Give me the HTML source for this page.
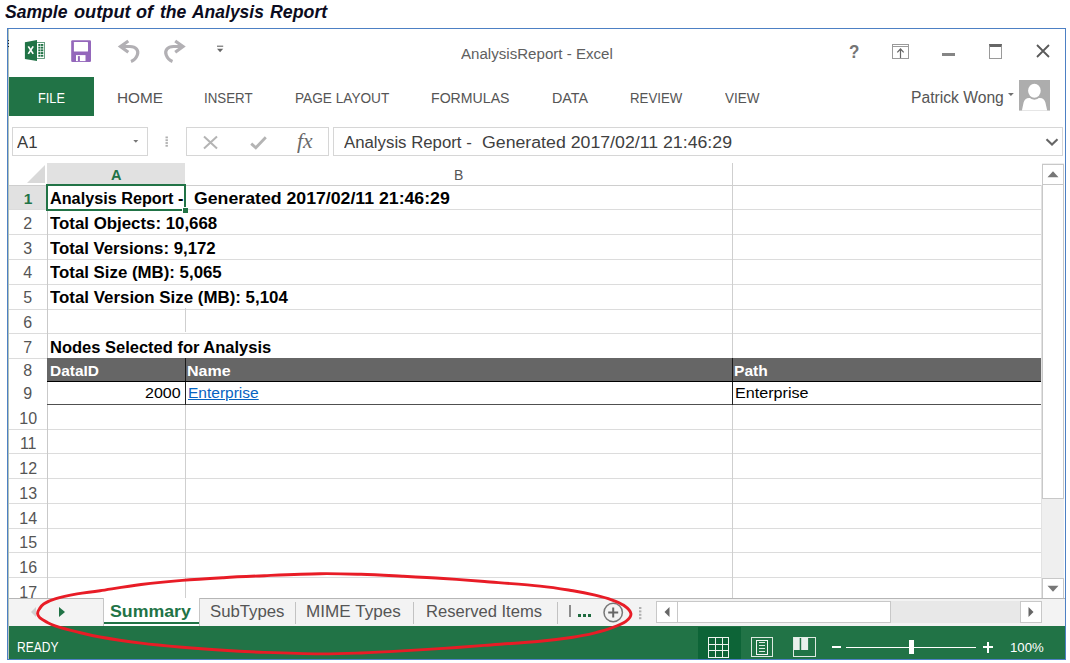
<!DOCTYPE html>
<html><head><meta charset="utf-8"><title>Analysis Report</title>
<style>
html,body{margin:0;padding:0;background:#fff;}
body{width:1070px;height:663px;position:relative;overflow:hidden;font-family:"Liberation Sans",sans-serif;}
.t{position:absolute;white-space:pre;line-height:1;transform-origin:0 50%;display:block;}
.a{position:absolute;box-sizing:border-box;}
svg{position:absolute;overflow:visible;}
.hl{position:absolute;left:9px;width:1032px;height:1px;background:#dcdcdc;}
.vl{position:absolute;width:1px;background:#cfcfcf;}
.sans{font-family:"Liberation Sans",sans-serif;}
.serif{font-family:"Liberation Serif",serif;}
.p{display:inline-block;width:0;height:0;vertical-align:baseline;}

</style></head>
<body>
<div class="a" style="left:7px;top:28px;width:1059px;height:632px;border:1px solid #4d80c4;background:#fff;"></div>
<div class="a" style="left:8px;top:29px;width:1px;height:630px;background:rgba(105,135,115,0.5);"></div>
<div class="a" style="left:8px;top:40px;width:1px;height:1.4px;background:#222;"></div><div class="a" style="left:8px;top:43px;width:1px;height:1.4px;background:#222;"></div><div class="a" style="left:8px;top:46px;width:1px;height:1.4px;background:#222;"></div>
<div class="a" style="left:9px;top:77px;width:85px;height:39px;background:#217346;"></div>
<svg style="left:0;top:0" width="1070" height="130">
<rect x="1019" y="80" width="31" height="30.6" fill="#adadad"/>
<path d="M1021.9 110.6 L1023.6 102.6 C1024.2 99.7 1026.3 97.9 1029 97.9 L1040 97.9 C1042.7 97.9 1044.8 99.7 1045.4 102.6 L1047.2 110.6 Z" fill="#fff"/>
<ellipse cx="1034.4" cy="91.2" rx="7.7" ry="8.5" fill="#adadad"/>
<ellipse cx="1034.4" cy="90.8" rx="6.3" ry="7" fill="#fff"/>
</svg>
<div class="a" style="left:12px;top:127px;width:136px;height:29px;border:1px solid #d6d6d6;background:#fff;"></div>
<div class="a" style="left:186px;top:127px;width:143px;height:29px;border:1px solid #d6d6d6;background:#fff;"></div>
<div class="a" style="left:333px;top:127px;width:730px;height:29px;border:1px solid #d6d6d6;background:#fff;"></div>
<div class="a" style="left:47px;top:163px;width:138px;height:21px;background:#e1e1e1;"></div>
<div class="a" style="left:9px;top:185px;width:37px;height:25px;background:#e1e1e1;"></div>
<svg style="left:27px;top:165px" width="18" height="18"><path d="M18 0 L18 18 L0 18 Z" fill="#d9d9d9"/></svg>
<div class="hl" style="top:185px;background:#cecece"></div>
<div class="hl" style="top:209px"></div>
<div class="hl" style="top:234px"></div>
<div class="hl" style="top:259px"></div>
<div class="hl" style="top:284px"></div>
<div class="hl" style="top:309px"></div>
<div class="hl" style="top:333px"></div>
<div class="hl" style="top:358px"></div>
<div class="hl" style="top:429px"></div>
<div class="hl" style="top:453px"></div>
<div class="hl" style="top:478px"></div>
<div class="hl" style="top:503px"></div>
<div class="hl" style="top:528px"></div>
<div class="hl" style="top:552px"></div>
<div class="hl" style="top:577px"></div>
<div class="vl" style="left:47px;top:185px;height:413px;background:#c9c9c9;"></div>
<div class="vl" style="left:185px;top:308px;height:24px;"></div>
<div class="vl" style="left:185px;top:405px;height:193px;"></div>
<div class="vl" style="left:732px;top:163px;height:435px;"></div>
<div class="vl" style="left:1041px;top:185px;height:413px;background:#e2e2e2;"></div>
<div class="a" style="left:47px;top:358px;width:994px;height:24px;background:#666;"></div>
<div class="a" style="left:185px;top:358px;width:1px;height:24px;background:#1a1a1a;"></div>
<div class="a" style="left:732px;top:358px;width:1px;height:24px;background:#1a1a1a;"></div>
<div class="a" style="left:47px;top:381px;width:994px;height:1px;background:#000;"></div>
<div class="a" style="left:47px;top:404px;width:994px;height:1px;background:#505050;"></div>
<div class="a" style="left:185px;top:382px;width:1px;height:23px;background:#222;"></div>
<div class="a" style="left:732px;top:382px;width:1px;height:23px;background:#222;"></div>
<div class="a" style="left:46px;top:184px;width:140px;height:27px;border:2px solid #217346;"></div>
<div class="a" style="left:182px;top:207px;width:6px;height:6px;background:#217346;border-left:1px solid #fff;border-top:1px solid #fff;"></div>
<div class="a" style="left:1042px;top:163px;width:22px;height:435px;background:#efefef;"></div>
<div class="a" style="left:1042px;top:164px;width:22px;height:21px;border:1px solid #c8c8c8;background:#fff;"></div>
<div class="a" style="left:1042px;top:185px;width:22px;height:314px;border:1px solid #c8c8c8;border-top:none;background:#fff;"></div>
<div class="a" style="left:1042px;top:578px;width:22px;height:21px;border:1px solid #c8c8c8;background:#fff;"></div>
<svg style="left:1042px;top:164px" width="22" height="21"><path d="M5.5 13.2 L11 7.2 L16.5 13.2 Z" fill="#777"/></svg>
<svg style="left:1042px;top:578px" width="22" height="21"><path d="M5.5 7.8 L11 13.8 L16.5 7.8 Z" fill="#777"/></svg>
<div class="a" style="left:9px;top:598px;width:1056px;height:28px;background:#f3f3f3;border-top:1px solid #b6b6b6;"></div>
<div class="a" style="left:103px;top:598px;width:97px;height:28px;background:#fff;border-right:1px solid #c6c6c6;border-left:1px solid #c6c6c6;"></div>
<div class="a" style="left:104px;top:622px;width:95px;height:2px;background:#217346;"></div>
<div class="a" style="left:295px;top:601.5px;width:1px;height:22px;background:#c2c2c2;"></div>
<div class="a" style="left:413px;top:601.5px;width:1px;height:22px;background:#c2c2c2;"></div>
<div class="a" style="left:557px;top:601.5px;width:1px;height:22px;background:#c2c2c2;"></div>
<div class="a" style="left:569.4px;top:605.3px;width:1.2px;height:11.6px;background:#8c8c8c;"></div>
<div class="a" style="left:578px;top:613.8px;width:3.2px;height:3.1px;background:#1e6b3f;"></div><div class="a" style="left:583.2px;top:613.8px;width:3.2px;height:3.1px;background:#1e6b3f;"></div><div class="a" style="left:588.2px;top:613.8px;width:3.2px;height:3.1px;background:#1e6b3f;"></div>
<svg style="left:30px;top:606px" width="8" height="12"><path d="M6 1 L1 6 L6 11 Z" fill="#d0d0d0"/></svg>
<svg style="left:58px;top:606px" width="8" height="12"><path d="M1 1 L7 6 L1 11 Z" fill="#217346"/></svg>
<svg style="left:602px;top:602px" width="22" height="22"><circle cx="11.2" cy="10.5" r="9.2" fill="none" stroke="#777" stroke-width="1.5"/><path d="M6.2 10.5 H16.2 M11.2 5.5 V15.5" stroke="#666" stroke-width="2"/></svg>
<svg style="left:638px;top:606px" width="5" height="14"><g fill="#b0b0b0"><rect x="1" y="1" width="2.4" height="2"/><rect x="1" y="4.4" width="2.4" height="2"/><rect x="1" y="7.8" width="2.4" height="2"/><rect x="1" y="11.2" width="2.4" height="2"/></g></svg>
<div class="a" style="left:656px;top:601px;width:386px;height:22px;background:#e8e8e8;"></div>
<div class="a" style="left:656px;top:601px;width:22px;height:22px;background:#fff;border:1px solid #c8c8c8;"></div>
<div class="a" style="left:677px;top:601px;width:214px;height:22px;background:#fff;border:1px solid #c8c8c8;"></div>
<div class="a" style="left:1020px;top:601px;width:22px;height:22px;background:#fff;border:1px solid #c8c8c8;"></div>
<svg style="left:656px;top:601px" width="22" height="22"><path d="M13.5 6 L8.5 11 L13.5 16 Z" fill="#666"/></svg>
<svg style="left:1020px;top:601px" width="22" height="22"><path d="M8.5 6 L13.5 11 L8.5 16 Z" fill="#666"/></svg>
<div class="a" style="left:9px;top:626px;width:1056px;height:33px;background:#217346;"></div>
<div class="a" style="left:698px;top:627px;width:43px;height:32px;background:#0d6437;"></div>
<svg style="left:708px;top:637px" width="21" height="21"><g fill="none" stroke="#eef4ef" stroke-width="1"><rect x="0.5" y="0.5" width="20" height="20"/><path d="M7.5 0 V21 M14.5 0 V21 M0 7.5 H21 M0 13.5 H21"/></g></svg>
<svg style="left:751px;top:637px" width="22" height="20"><g fill="none" stroke="#dfeae2" stroke-width="1"><rect x="0.5" y="0.5" width="21" height="19"/><rect x="5.5" y="3.5" width="11" height="14" stroke="#f4f8f5"/><path d="M8 5.5 H14 M8 8.5 H14 M8 11.5 H14 M8 14.5 H14"/></g></svg>
<svg style="left:793px;top:637px" width="23" height="20"><g fill="none" stroke="#dfeae2" stroke-width="1"><rect x="0.5" y="0.5" width="22" height="19"/></g><rect x="1" y="0.5" width="5.7" height="12.5" fill="#eaf1ec"/><rect x="8.2" y="0.5" width="6.9" height="12.5" fill="#eaf1ec"/></svg>
<div class="a" style="left:832.4px;top:645.6px;width:8.6px;height:2.8px;background:#fff;"></div>
<div class="a" style="left:846px;top:646.5px;width:130px;height:1px;background:#fff;"></div>
<div class="a" style="left:908.5px;top:640px;width:5px;height:14px;background:#fff;"></div>
<div class="a" style="left:982.6px;top:645.8px;width:10.6px;height:2.6px;background:#fff;"></div>
<div class="a" style="left:986.6px;top:641.8px;width:2.6px;height:10.8px;background:#fff;"></div>
<svg style="left:0;top:0" width="1070" height="663"><path d="M37.6 613.7 C37.5 612.3 38.1 610.9 39.2 609.3 C40.3 607.6 41.4 605.5 44.0 603.8 C46.6 602.0 49.6 600.4 55.1 598.8 C60.6 597.1 69.6 595.2 77.1 593.9 C84.6 592.5 89.3 592.3 100.0 590.7 C110.7 589.1 127.4 586.2 141.1 584.5 C154.8 582.8 168.5 581.5 182.2 580.4 C195.9 579.3 209.7 578.5 223.4 577.7 C237.1 576.9 248.4 576.4 264.5 575.7 C280.6 575.0 303.9 573.9 320.0 573.7 C336.1 573.5 347.4 573.9 361.1 574.3 C374.8 574.7 388.5 575.5 402.2 576.2 C415.9 576.9 429.7 577.6 443.4 578.5 C457.1 579.4 468.4 580.2 484.5 581.5 C500.6 582.8 525.2 584.6 540.0 586.1 C554.8 587.6 563.8 589.3 573.0 590.8 C582.2 592.3 588.7 593.7 595.1 595.2 C601.5 596.7 606.8 598.1 611.6 599.8 C616.4 601.5 620.5 603.0 623.7 605.3 C626.9 607.6 630.5 610.8 630.9 613.5 C631.3 616.2 629.1 618.9 625.9 621.3 C622.7 623.7 616.7 626.0 611.6 627.9 C606.5 629.8 601.5 631.2 595.1 632.8 C588.7 634.3 582.2 635.8 573.0 637.2 C563.8 638.6 554.8 639.8 540.0 641.2 C525.2 642.6 500.6 644.2 484.5 645.4 C468.4 646.6 457.1 647.5 443.4 648.4 C429.7 649.3 415.9 650.1 402.2 650.9 C388.5 651.7 374.8 652.5 361.1 653.0 C347.4 653.5 336.1 654.0 320.0 653.9 C303.9 653.8 280.6 653.0 264.5 652.4 C248.4 651.8 237.1 651.2 223.4 650.3 C209.7 649.4 195.9 648.4 182.2 647.2 C168.5 646.0 154.8 644.8 141.1 643.1 C127.4 641.4 110.7 638.9 100.0 637.0 C89.3 635.1 84.6 633.8 77.1 631.9 C69.6 630.0 60.2 627.5 55.1 625.8 C50.0 624.1 48.9 623.3 46.3 621.9 C43.7 620.5 41.0 618.9 39.6 617.5 C38.2 616.1 37.7 615.1 37.6 613.7 Z" fill="none" stroke="#e81c26" stroke-width="2.9" stroke-linejoin="round"/></svg>
<svg style="left:0;top:0" width="120" height="70">
<rect x="36.5" y="42.5" width="8" height="16" fill="#fff" stroke="#217346" stroke-width="0.9" stroke-opacity="0.75"/>
<g fill="#217346"><rect x="38.3" y="44" width="2.2" height="1.9"/><rect x="41" y="44" width="2.3" height="1.9"/><rect x="38.3" y="46.7" width="2.2" height="1.9"/><rect x="41" y="46.7" width="2.3" height="1.9"/><rect x="38.3" y="49.4" width="2.2" height="1.9"/><rect x="41" y="49.4" width="2.3" height="1.9"/><rect x="38.3" y="52.1" width="2.2" height="1.9"/><rect x="41" y="52.1" width="2.3" height="1.9"/><rect x="38.3" y="54.8" width="2.2" height="1.9"/><rect x="41" y="54.8" width="2.3" height="1.9"/></g>
<path d="M24.9 42.3 L37 40 L37 61 L24.9 58.9 Z" fill="#217346"/>
<path d="M28.3 46.4 L33.2 53.9 M33.2 46.4 L28.3 53.9" stroke="#fff" stroke-width="1.7"/>
</svg>
<svg style="left:0;top:0" width="120" height="70">
<rect x="71.2" y="40.2" width="19.8" height="21.7" rx="1.2" fill="#9467bb"/>
<rect x="73.9" y="41.9" width="14.1" height="9.6" rx="0.6" fill="#fff"/>
<rect x="76" y="55.1" width="9.5" height="6" fill="#fff"/>
<rect x="77.9" y="56.1" width="2" height="5" fill="#9467bb"/>
</svg>
<svg style="left:0;top:0" width="260" height="70"><path d="M128.3 41 L120.5 46.5 L128.3 52.2" fill="none" stroke="#b2b0b4" stroke-width="3.2"/><path d="M121 46.5 H130 C136 46.5 139 50.5 137.3 55 C136.2 58 134 60.3 131 61.4" fill="none" stroke="#b2b0b4" stroke-width="3.2"/><g transform="translate(303.5,0) scale(-1,1)"><path d="M128.3 41 L120.5 46.5 L128.3 52.2" fill="none" stroke="#b2b0b4" stroke-width="3.2"/><path d="M121 46.5 H130 C136 46.5 139 50.5 137.3 55 C136.2 58 134 60.3 131 61.4" fill="none" stroke="#b2b0b4" stroke-width="3.2"/></g></svg>
<svg style="left:216px;top:44px" width="8" height="9"><path d="M1 2.2 H7.2" stroke="#666" stroke-width="1.1"/><path d="M1 4.8 L7.2 4.8 L4.1 8.2 Z" fill="#666"/></svg>
<svg style="left:892px;top:44px" width="18" height="15"><rect x="0.5" y="0.5" width="16" height="14" fill="none" stroke="#9a9a9a" stroke-width="1"/><path d="M0 2.5 H17" stroke="#9a9a9a"/><path d="M8.5 14 V5 M5.3 8.4 L8.5 5 L11.7 8.4" fill="none" stroke="#666" stroke-width="1.2"/></svg>
<div class="a" style="left:941.5px;top:53px;width:13px;height:3px;background:#858585;"></div>
<div class="a" style="left:989px;top:44px;width:13px;height:15px;border:1px solid #9a9a9a;border-top:3px solid #666;"></div>
<svg style="left:1036px;top:44px" width="14" height="14"><path d="M1 1 L13 13 M13 1 L1 13" stroke="#5a5a5a" stroke-width="1.8"/></svg>
<svg style="left:1008px;top:93.4px" width="7" height="4"><path d="M0 0 H5.8 L2.9 3.1 Z" fill="#707070"/></svg>
<svg style="left:133px;top:140px" width="6" height="3"><path d="M0.3 0 H5.3 L2.8 2.8 Z" fill="#777"/></svg>
<svg style="left:165px;top:136px" width="4" height="11"><g fill="#b0b0b0"><rect x="0.5" y="0.5" width="2.4" height="1.8"/><rect x="0.5" y="3.3" width="2.4" height="1.8"/><rect x="0.5" y="6.1" width="2.4" height="1.8"/><rect x="0.5" y="8.9" width="2.4" height="1.8"/></g></svg>
<svg style="left:203px;top:136px" width="15" height="13"><path d="M1 0.5 L14 12.5 M14 0.5 L1 12.5" stroke="#b4b4b4" stroke-width="2"/></svg>
<svg style="left:250px;top:136px" width="17" height="13"><path d="M1.2 7.6 L5.8 11.8 L15.8 1.2" fill="none" stroke="#b4b4b4" stroke-width="2.8"/></svg>
<svg style="left:1045px;top:138px" width="14" height="9"><path d="M1.5 1.2 L7 6.6 L12.5 1.2" fill="none" stroke="#666" stroke-width="2.1"/></svg>
<span class="t sans" style="left:5.2px;top:4.00px;font-size:17.5px;font-weight:700;font-style:italic;color:#0c0c20;transform:scaleX(1.0040);">Sample</span>
<span class="t sans" style="left:73.7px;top:4.00px;font-size:17.5px;font-weight:700;font-style:italic;color:#0c0c20;transform:scaleX(1.0400);">output</span>
<span class="t sans" style="left:135.9px;top:4.00px;font-size:17.5px;font-weight:700;font-style:italic;color:#0c0c20;transform:scaleX(1.0344);">of</span>
<span class="t sans" style="left:159.5px;top:4.00px;font-size:17.5px;font-weight:700;font-style:italic;color:#0c0c20;transform:scaleX(1.0057);">the</span>
<span class="t sans" style="left:191.8px;top:4.00px;font-size:17.5px;font-weight:700;font-style:italic;color:#0c0c20;transform:scaleX(0.9988);">Analysis</span>
<span class="t sans" style="left:270.1px;top:4.00px;font-size:17.5px;font-weight:700;font-style:italic;color:#0c0c20;transform:scaleX(1.0144);">Report</span>
<span class="t sans" style="left:460.9px;top:46.00px;font-size:15.5px;font-weight:400;font-style:normal;color:#606060;transform:scaleX(0.9736);">AnalysisReport - Excel</span>
<span class="t sans" style="left:37.8px;top:90.00px;font-size:15.5px;font-weight:400;font-style:normal;color:#fff;transform:scaleX(0.8218);">FILE</span>
<span class="t sans" style="left:116.6px;top:90.00px;font-size:15.5px;font-weight:400;font-style:normal;color:#555;transform:scaleX(0.9892);">HOME</span>
<span class="t sans" style="left:203.5px;top:90.00px;font-size:15.5px;font-weight:400;font-style:normal;color:#555;transform:scaleX(0.8592);">INSERT</span>
<span class="t sans" style="left:294.6px;top:90.00px;font-size:15.5px;font-weight:400;font-style:normal;color:#555;transform:scaleX(0.8805);">PAGE LAYOUT</span>
<span class="t sans" style="left:431.3px;top:90.00px;font-size:15.5px;font-weight:400;font-style:normal;color:#555;transform:scaleX(0.9115);">FORMULAS</span>
<span class="t sans" style="left:552.3px;top:90.00px;font-size:15.5px;font-weight:400;font-style:normal;color:#555;transform:scaleX(0.9220);">DATA</span>
<span class="t sans" style="left:630.3px;top:90.00px;font-size:15.5px;font-weight:400;font-style:normal;color:#555;transform:scaleX(0.8536);">REVIEW</span>
<span class="t sans" style="left:725.4px;top:90.00px;font-size:15.5px;font-weight:400;font-style:normal;color:#555;transform:scaleX(0.8707);">VIEW</span>
<span class="t sans" style="left:911.0px;top:90.00px;font-size:16px;font-weight:400;font-style:normal;color:#555;transform:scaleX(0.9783);">Patrick Wong</span>
<span class="t sans" style="left:848.5px;top:43.00px;font-size:18.5px;font-weight:700;font-style:normal;color:#747474;transform:scaleX(0.9200);">?</span>
<span class="t sans" style="left:16.8px;top:135.00px;font-size:16px;font-weight:400;font-style:normal;color:#3a3a3a;transform:scaleX(1.0500);">A1</span>
<span class="t serif" style="left:296.7px;top:131.00px;font-size:20px;font-weight:400;font-style:italic;color:#6a6a6a;transform:scaleX(1.0800);">fx</span>
<span class="t sans" style="left:344.0px;top:135.00px;font-size:16px;font-weight:400;font-style:normal;color:#404040;transform:scaleX(1.0490);">Analysis Report -</span>
<span class="t sans" style="left:482.3px;top:135.00px;font-size:16px;font-weight:400;font-style:normal;color:#404040;transform:scaleX(1.1078);">Generated 2017/02/11 21:46:29</span>
<span class="t sans" style="left:111.0px;top:168.00px;font-size:14.5px;font-weight:700;font-style:normal;color:#217346;transform:scaleX(1.0000);">A</span>
<span class="t sans" style="left:453.9px;top:168.00px;font-size:14px;font-weight:400;font-style:normal;color:#555;transform:scaleX(1.0000);">B</span>
<span class="t sans" style="left:23.7px;top:191.00px;font-size:15.5px;font-weight:700;font-style:normal;color:#217346;transform:scaleX(1.0000);">1</span>
<span class="t sans" style="left:23.2px;top:216.00px;font-size:16px;font-weight:400;font-style:normal;color:#555;transform:scaleX(1.0000);">2</span>
<span class="t sans" style="left:23.2px;top:241.00px;font-size:16px;font-weight:400;font-style:normal;color:#555;transform:scaleX(1.0000);">3</span>
<span class="t sans" style="left:23.2px;top:265.00px;font-size:16px;font-weight:400;font-style:normal;color:#555;transform:scaleX(1.0000);">4</span>
<span class="t sans" style="left:23.2px;top:290.00px;font-size:16px;font-weight:400;font-style:normal;color:#555;transform:scaleX(1.0000);">5</span>
<span class="t sans" style="left:23.2px;top:315.00px;font-size:16px;font-weight:400;font-style:normal;color:#555;transform:scaleX(1.0000);">6</span>
<span class="t sans" style="left:23.2px;top:340.00px;font-size:16px;font-weight:400;font-style:normal;color:#555;transform:scaleX(1.0000);">7</span>
<span class="t sans" style="left:23.2px;top:363.00px;font-size:16px;font-weight:400;font-style:normal;color:#555;transform:scaleX(1.0000);">8</span>
<span class="t sans" style="left:23.2px;top:386.00px;font-size:16px;font-weight:400;font-style:normal;color:#555;transform:scaleX(1.0000);">9</span>
<span class="t sans" style="left:19.3px;top:411.00px;font-size:16px;font-weight:400;font-style:normal;color:#555;transform:scaleX(1.0000);">10</span>
<span class="t sans" style="left:19.9px;top:436.00px;font-size:16px;font-weight:400;font-style:normal;color:#555;transform:scaleX(1.0000);">11</span>
<span class="t sans" style="left:19.3px;top:461.00px;font-size:16px;font-weight:400;font-style:normal;color:#555;transform:scaleX(1.0000);">12</span>
<span class="t sans" style="left:19.3px;top:486.00px;font-size:16px;font-weight:400;font-style:normal;color:#555;transform:scaleX(1.0000);">13</span>
<span class="t sans" style="left:19.3px;top:511.00px;font-size:16px;font-weight:400;font-style:normal;color:#555;transform:scaleX(1.0000);">14</span>
<span class="t sans" style="left:19.3px;top:535.00px;font-size:16px;font-weight:400;font-style:normal;color:#555;transform:scaleX(1.0000);">15</span>
<span class="t sans" style="left:19.3px;top:560.00px;font-size:16px;font-weight:400;font-style:normal;color:#555;transform:scaleX(1.0000);">16</span>
<span class="t sans" style="left:19.3px;top:585.00px;font-size:16px;font-weight:400;font-style:normal;color:#555;transform:scaleX(1.0000);">17</span>
<span class="t sans" style="left:50.2px;top:191.00px;font-size:16px;font-weight:700;font-style:normal;color:#000;transform:scaleX(1.0137);">Analysis Report -</span>
<span class="t sans" style="left:194.2px;top:191.00px;font-size:16px;font-weight:700;font-style:normal;color:#000;transform:scaleX(1.1060);">Generated 2017/02/11 21:46:29</span>
<span class="t sans" style="left:50.2px;top:216.00px;font-size:16px;font-weight:700;font-style:normal;color:#000;transform:scaleX(1.0524);">Total Objects: 10,668</span>
<span class="t sans" style="left:50.2px;top:241.00px;font-size:16px;font-weight:700;font-style:normal;color:#000;transform:scaleX(1.0487);">Total Versions: 9,172</span>
<span class="t sans" style="left:50.2px;top:265.00px;font-size:16px;font-weight:700;font-style:normal;color:#000;transform:scaleX(1.0515);">Total Size (MB): 5,065</span>
<span class="t sans" style="left:50.2px;top:290.00px;font-size:16px;font-weight:700;font-style:normal;color:#000;transform:scaleX(1.0543);">Total Version Size (MB): 5,104</span>
<span class="t sans" style="left:49.6px;top:340.00px;font-size:16px;font-weight:700;font-style:normal;color:#000;transform:scaleX(1.0308);">Nodes Selected for Analysis</span>
<span class="t sans" style="left:50.4px;top:364.00px;font-size:14px;font-weight:700;font-style:normal;color:#fff;transform:scaleX(1.1046);">DataID</span>
<span class="t sans" style="left:187.0px;top:364.00px;font-size:14px;font-weight:700;font-style:normal;color:#fff;transform:scaleX(1.1431);">Name</span>
<span class="t sans" style="left:734.4px;top:364.00px;font-size:14px;font-weight:700;font-style:normal;color:#fff;transform:scaleX(1.1139);">Path</span>
<span class="t sans" style="left:144.9px;top:386.00px;font-size:14px;font-weight:400;font-style:normal;color:#000;transform:scaleX(1.1458);">2000</span>
<span class="t sans" style="left:188.0px;top:386.00px;font-size:14px;font-weight:400;font-style:normal;color:#0563c1;transform:scaleX(1.1079);text-decoration:underline;">Enterprise</span>
<span class="t sans" style="left:734.6px;top:386.00px;font-size:14px;font-weight:400;font-style:normal;color:#000;transform:scaleX(1.1534);">Enterprise</span>
<span class="t sans" style="left:110.4px;top:604.00px;font-size:16px;font-weight:700;font-style:normal;color:#217346;transform:scaleX(1.1080);">Summary</span>
<span class="t sans" style="left:209.5px;top:604.00px;font-size:16px;font-weight:400;font-style:normal;color:#555;transform:scaleX(1.0470);">SubTypes</span>
<span class="t sans" style="left:306.0px;top:604.00px;font-size:16px;font-weight:400;font-style:normal;color:#555;transform:scaleX(1.0697);">MIME Types</span>
<span class="t sans" style="left:426.2px;top:604.00px;font-size:16px;font-weight:400;font-style:normal;color:#555;transform:scaleX(1.0353);">Reserved Items</span>
<span class="t sans" style="left:17.1px;top:640.00px;font-size:14px;font-weight:400;font-style:normal;color:#fff;transform:scaleX(0.8583);">READY</span>
<span class="t sans" style="left:1009.5px;top:642.00px;font-size:12.5px;font-weight:400;font-style:normal;color:#fff;transform:scaleX(1.0536);">100%</span>
</body></html>
